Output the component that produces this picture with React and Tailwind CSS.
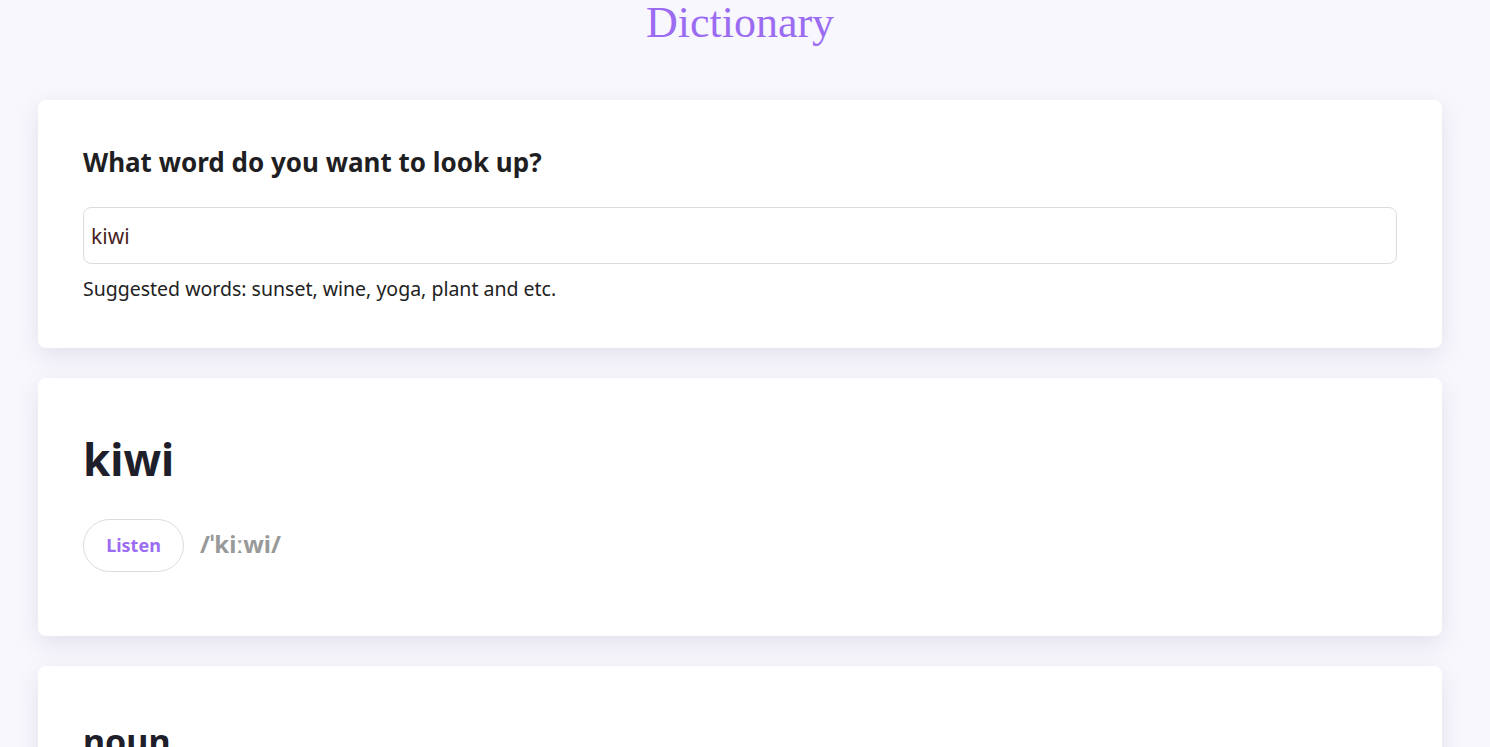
import { useState } from 'react';

const sans = { fontFamily: '"Noto Sans", "Open Sans", sans-serif' };

export default function App() {
  const [word, setWord] = useState('kiwi');

  return (
    <div className="min-h-screen bg-[#f8f7fd] pl-[38px] pr-[48px]" style={sans}>
      <h1
        className="text-center text-[44px] leading-[46px] text-[#9b6cf2] pb-[54px]"
        style={{ fontFamily: '"Liberation Serif", "DejaVu Serif", serif' }}
      >
        Dictionary
      </h1>

      <section className="bg-white rounded-lg shadow-[0_8px_24px_rgba(40,30,90,0.1)] px-[45px] pt-[43px] pb-[44px] mb-[30px]">
        <h2 className="text-[26px] leading-[39px] font-bold text-[#1f1f23] mb-[25px]">
          What word do you want to look up?
        </h2>
        <input
          type="text"
          value={word}
          onChange={(e) => setWord(e.target.value)}
          className="w-full h-[57px] border border-[#dcdcdc] rounded-lg px-[7px] text-[21px] text-[#4a1f1f] outline-none"
        />
        <p className="mt-[10px] text-[19.5px] leading-[30px] text-[#222]">
          Suggested words: sunset, wine, yoga, plant and etc.
        </p>
      </section>

      <section className="bg-white rounded-lg shadow-[0_8px_24px_rgba(40,30,90,0.1)] px-[45px] pt-[51px] pb-[64px] mb-[30px]">
        <h2 className="text-[44px] font-bold leading-[60px] text-[#1f1f2b] mb-[30px]">kiwi</h2>
        <div className="flex items-center gap-[16px]">
          <button className="w-[101px] h-[53px] rounded-full border border-[#dcdcdc] text-[#9b6cf2] text-[18px] font-bold">
            Listen
          </button>
          <span className="text-[24px] font-bold text-[#999] pb-[4px]">/ˈkiːwi/</span>
        </div>
      </section>

      <section className="bg-white rounded-lg shadow-[0_8px_24px_rgba(40,30,90,0.1)] px-[45px] pt-[50px] pb-[48px]">
        <h3 className="text-[34px] font-bold text-[#1f1f2b]">noun</h3>
        <p className="mt-4 text-[20px] text-[#222]">
          A flightless bird of New Zealand with a long slender bill.
        </p>
      </section>
    </div>
  );
}
